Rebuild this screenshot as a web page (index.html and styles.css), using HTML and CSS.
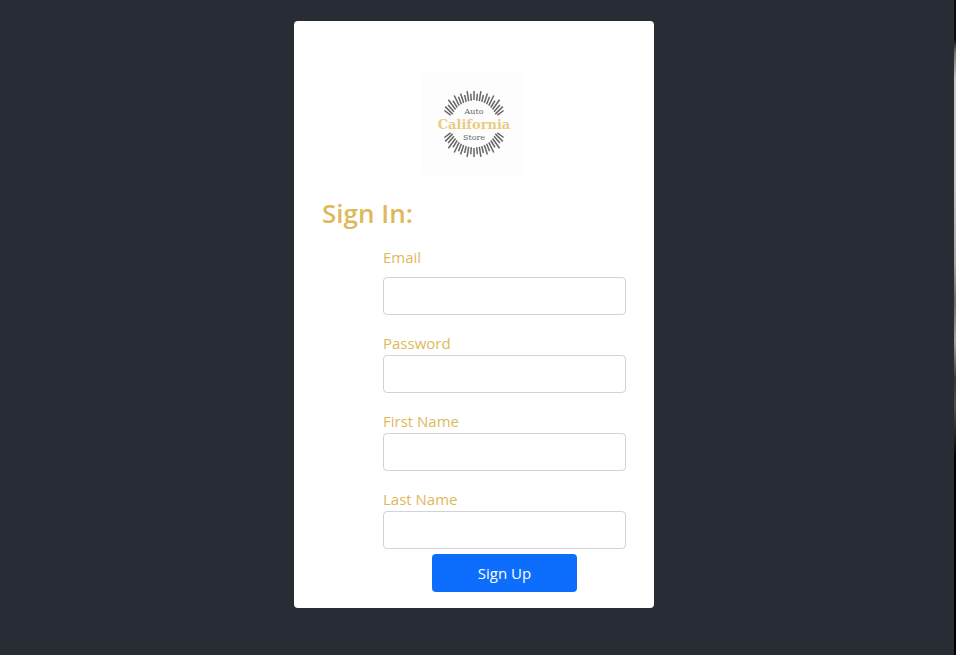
FILE: index.html
```
<!DOCTYPE html>
<html lang="en">
<head>
<meta charset="utf-8">
<meta name="viewport" content="width=device-width, initial-scale=1">
<title>Auto California Store</title>
<link rel="stylesheet" href="styles.css">
</head>
<body>
<main class="page">
  <section class="card">
    <svg class="logo" viewBox="-52 -52 104 104" role="img" aria-label="Auto California Store">
      <defs>
        <path id="rays" d="M2.7-23.3L3.3-30.3M5.3-22.9L6.9-32.8M7.8-22.2L9.4-29M10.3-21.1L13.4-30.6M12.6-19.8L15.6-27.2M14.8-18.3L19.8-28.5M16.8-16.5L21-23.3M18.5-14.5L25.6-24.2M20-12.3L25.9-19.1M21.3-9.9L28.8-17.4M23.4-8.9L29.6-13.5"/>
      </defs>
      <rect class="logo-bg" x="-52" y="-51" width="102" height="102"/>
      <g class="rays">
        <path d="M0-24V-33M0 24V33"/>
        <use href="#rays"/>
        <use href="#rays" transform="scale(-1 1)"/>
        <use href="#rays" transform="scale(1 -1)"/>
        <use href="#rays" transform="scale(-1 -1)"/>
      </g>
      <text class="logo-small" x="0" y="-10">Auto</text>
      <text class="logo-name" x="0" y="5">California</text>
      <text class="logo-small" x="0" y="16">Store</text>
    </svg>
    <h1 class="title">Sign In:</h1>
    <form class="form">
      <div class="field field-spaced">
        <label for="email">Email</label>
        <input id="email" type="email">
      </div>
      <div class="field">
        <label for="password">Password</label>
        <input id="password" type="password">
      </div>
      <div class="field">
        <label for="first-name">First Name</label>
        <input id="first-name" type="text">
      </div>
      <div class="field">
        <label for="last-name">Last Name</label>
        <input id="last-name" type="text">
      </div>
      <button class="submit" type="submit">Sign Up</button>
    </form>
  </section>
</main>
<div class="backdrop"></div>
</body>
</html>
```
FILE: styles.css
```
* {
  box-sizing: border-box;
}

body {
  margin: 0;
  min-height: 100vh;
  display: flex;
  background: #282c34;
  font-family: "Segoe UI", "Open Sans", "Noto Sans", sans-serif;
  font-size: 15px;
  line-height: 24px;
  color: #deb95b;
}

.page {
  flex: 1;
  padding: 21px 6px 21px 0;
}

.card {
  width: 100%;
  max-width: 360px;
  margin: 0 auto;
  padding: 51px 28px 16px;
  background: #fff;
  border-radius: 4px;
}

.logo {
  display: block;
  width: 104px;
  height: 104px;
  margin: 0 auto 20px;
}

.logo-bg {
  fill: #fdfdfd;
}

.rays {
  fill: none;
  stroke: #66666a;
  stroke-width: 1.5;
}

.logo text {
  font-family: "DejaVu Serif", serif;
  text-anchor: middle;
}

.logo-small {
  font-size: 8px;
  fill: #66666a;
}

.logo .logo-name {
  font-size: 13px;
  font-weight: 700;
  fill: #e8cd82;
}

.title {
  margin: 0 0 15px;
  font-size: 26px;
  line-height: 34px;
  font-weight: 600;
}

.form {
  margin-left: 61px;
  display: flex;
  flex-direction: column;
}

.field {
  display: flex;
  flex-direction: column;
  margin-bottom: 16px;
}

.field-spaced {
  gap: 8px;
}

.field:last-of-type {
  margin-bottom: 5px;
}

.field input {
  width: 100%;
  height: 38px;
  padding: 6px 12px;
  border: 1px solid #ced4da;
  border-radius: 4px;
  background: #fff;
  color: #212529;
  font: inherit;
}

.submit {
  align-self: center;
  width: 60%;
  height: 38px;
  padding: 6px 12px;
  border: 0;
  border-radius: 4px;
  background: #0d6efd;
  color: #fff;
  font: inherit;
}

.backdrop {
  width: 2px;
  background: linear-gradient(#0b0c0e 0 6%, #77706c 8%, #c4c4c6 12% 28%, #aaa3a3 40%, #776860 46%, #aaa09c 52%, #42342c 58%, #5a4c44 62%, #000 70%);
}
```
